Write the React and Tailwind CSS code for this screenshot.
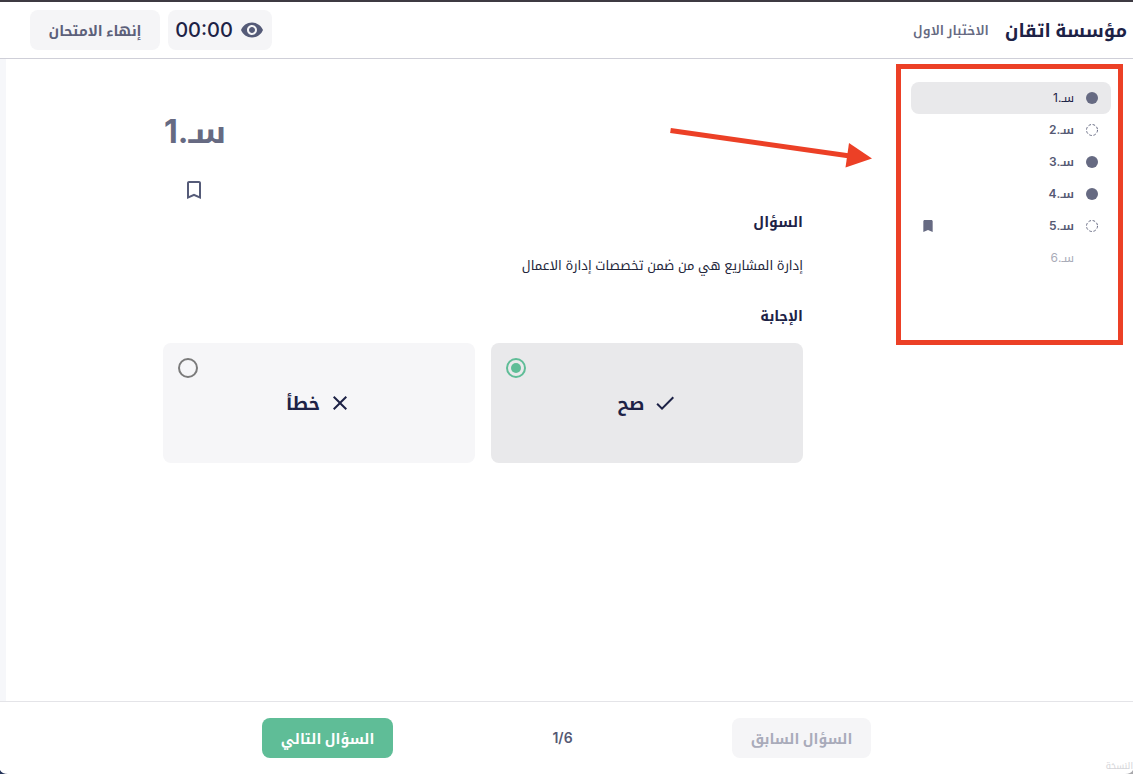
import { useState } from 'react'
import { MdVisibility, MdBookmark, MdBookmarkBorder, MdCheck, MdClose } from 'react-icons/md'

const questions = [
  { id: 1, status: 'answered' },
  { id: 2, status: 'skipped' },
  { id: 3, status: 'answered' },
  { id: 4, status: 'answered' },
  { id: 5, status: 'skipped', bookmarked: true },
  { id: 6, status: 'locked' },
]

const options = [
  { id: 'true', label: 'صح', Icon: MdCheck },
  { id: 'false', label: 'خطأ', Icon: MdClose },
]

function StatusDot({ status }) {
  if (status === 'locked') return <span className="size-3 shrink-0" />
  return (
    <svg viewBox="0 0 12 12" className="size-3 shrink-0 text-[#666a82]">
      {status === 'answered' ? (
        <circle cx="6" cy="6" r="6" fill="currentColor" />
      ) : (
        <circle cx="6" cy="6" r="5.5" fill="none" stroke="currentColor" strokeDasharray="2.6 1.72" />
      )}
    </svg>
  )
}

function QuestionItem({ question, active, onSelect }) {
  const locked = question.status === 'locked'
  const tone = locked
    ? 'font-normal text-[#a9abb8]'
    : active
      ? 'bg-[#e9e9eb] font-normal text-[#1d2246]'
      : 'font-semibold text-[#555973]'

  return (
    <li>
      <button
        type="button"
        disabled={locked}
        onClick={() => onSelect(question.id)}
        className={`flex h-8 w-full items-center gap-3 rounded-lg px-[13px] text-xs ${tone}`}
      >
        <StatusDot status={question.status} />
        <span>سـ.{question.id}</span>
        {question.bookmarked && <MdBookmark className="ms-auto size-4 -me-1 text-[#666a82]" />}
      </button>
    </li>
  )
}

function Header() {
  return (
    <header className="flex h-[59px] shrink-0 items-center justify-between border-t-2 border-b border-t-[#3d3a42] border-b-[#cfcfd8] ps-1.5 pe-[30px]">
      <div className="flex items-center gap-4 pt-0.5">
        <h1 className="text-lg font-bold text-[#1d2246]">مؤسسة اتقان</h1>
        <p className="text-[13px] font-semibold text-[#666a82]">الاختبار الاول</p>
      </div>
      <div className="flex items-center gap-2">
        <button type="button" className="flex h-10 items-center gap-2 rounded-lg bg-[#f5f5f7] px-2 text-xl font-medium text-[#1d2246]">
          <MdVisibility className="size-6 shrink-0 text-[#555b78]" />
          <span className="flex w-14 justify-center">00:00</span>
        </button>
        <button type="button" className="h-10 w-[130px] rounded-lg bg-[#f5f5f7] pt-0.5 text-sm font-bold whitespace-nowrap text-[#5c607a]">
          إنهاء الامتحان
        </button>
      </div>
    </header>
  )
}

function AnswerCard({ option, checked, onChange }) {
  const { Icon } = option
  return (
    <label className={`relative flex h-[120px] flex-1 cursor-pointer items-center justify-center gap-2 rounded-lg text-[#1d2246] ${checked ? 'bg-[#e9e9eb]' : 'bg-[#f6f6f8]'}`}>
      <input
        type="radio"
        name="answer"
        value={option.id}
        checked={checked}
        onChange={onChange}
        className="peer absolute top-[15px] left-[15px] size-5 appearance-none rounded-full border-2 border-[#7b7b7b] checked:border-[#5fbd97]"
      />
      <span className="absolute top-5 left-5 hidden size-2.5 rounded-full bg-[#5fbd97] peer-checked:block" />
      <Icon className="size-6" />
      <span className="pt-0.5 text-lg font-bold">{option.label}</span>
    </label>
  )
}

// Callout arrow pointing at the question list
function Arrow() {
  return (
    <svg viewBox="0 0 204 48" className="pointer-events-none absolute top-16 right-[261px] h-12 w-[204px]">
      <path d="M2.5 7.5 182 33" stroke="#ec4026" strokeWidth="5" fill="none" />
      <path d="M181 20 204 35.5 177.5 44.5Z" fill="#ec4026" />
    </svg>
  )
}

export default function App() {
  const [current, setCurrent] = useState(1)
  const [answer, setAnswer] = useState('true')
  const [bookmarked, setBookmarked] = useState(false)

  return (
    <div dir="rtl" className="flex min-h-screen flex-col bg-white font-[Inter,'Noto_Kufi_Arabic','Noto_Sans_Arabic','DejaVu_Sans',sans-serif]">
      <Header />

      <div className="relative flex flex-1 items-start border-l-6 border-[#f6f7fa] ps-2.5">
        <nav aria-label="الأسئلة" className="mt-[5px] h-[281px] w-[227px] shrink-0 border-5 border-[#ec4026] ps-[7px] pe-2.5 pt-[13px]">
          <ul>
            {questions.map(q => (
              <QuestionItem key={q.id} question={q} active={q.id === current} onSelect={setCurrent} />
            ))}
          </ul>
        </nav>

        <main className="ms-[93px] flex max-w-[640px] flex-1 flex-col text-[#1d2246]">
          <div className="flex w-16 flex-col items-center gap-[26px] self-end pt-[53px]">
            <h2 className="text-[32px] leading-10 font-bold whitespace-nowrap text-[#666a82]">سـ.{current}</h2>
            <button type="button" aria-label="حفظ السؤال" onClick={() => setBookmarked(!bookmarked)} className="ms-0.5 text-[#555b78]">
              {bookmarked ? <MdBookmark className="size-6" /> : <MdBookmarkBorder className="size-6" />}
            </button>
          </div>
          <h3 className="mt-2 text-sm leading-6 font-bold">السؤال</h3>
          <p className="mt-[19px] text-[13px] leading-6 text-[#23263a]">إدارة المشاريع هي من ضمن تخصصات إدارة الاعمال</p>
          <h3 className="mt-[27px] text-sm leading-6 font-bold">الإجابة</h3>
          <div className="mt-[15px] flex gap-4">
            {options.map(option => (
              <AnswerCard
                key={option.id}
                option={option}
                checked={answer === option.id}
                onChange={() => setAnswer(option.id)}
              />
            ))}
          </div>
        </main>

        <Arrow />
      </div>

      <footer className="relative flex h-[73px] shrink-0 items-center justify-center border-t border-[#e4e4e8]">
        <div className="flex w-full max-w-[609px] items-center justify-between">
          <button type="button" disabled className="h-10 w-[139px] rounded-lg bg-[#f5f5f7] pt-0.5 text-sm font-bold whitespace-nowrap text-[#a9abba]">
            السؤال السابق
          </button>
          <span className="text-sm font-semibold text-[#555973]">{current}/6</span>
          <button type="button" className="h-10 w-[131px] rounded-lg bg-[#5fbd97] pt-0.5 text-sm font-bold whitespace-nowrap text-white">
            السؤال التالي
          </button>
        </div>
        <span className="absolute right-0 bottom-0 text-[9px] leading-4 text-[#d4d4d8]">النسخة</span>
        {/* Rounded window corners */}
        <svg viewBox="0 0 8 4" className="absolute bottom-0 left-0 h-1 w-2">
          <path d="M0 0Q2 4 8 4H0Z" fill="#26355a" />
        </svg>
        <svg viewBox="0 0 8 4" className="absolute right-0 bottom-0 h-1 w-2">
          <path d="M8 0Q6 4 0 4H8Z" fill="#a8a8ac" />
        </svg>
      </footer>
    </div>
  )
}
